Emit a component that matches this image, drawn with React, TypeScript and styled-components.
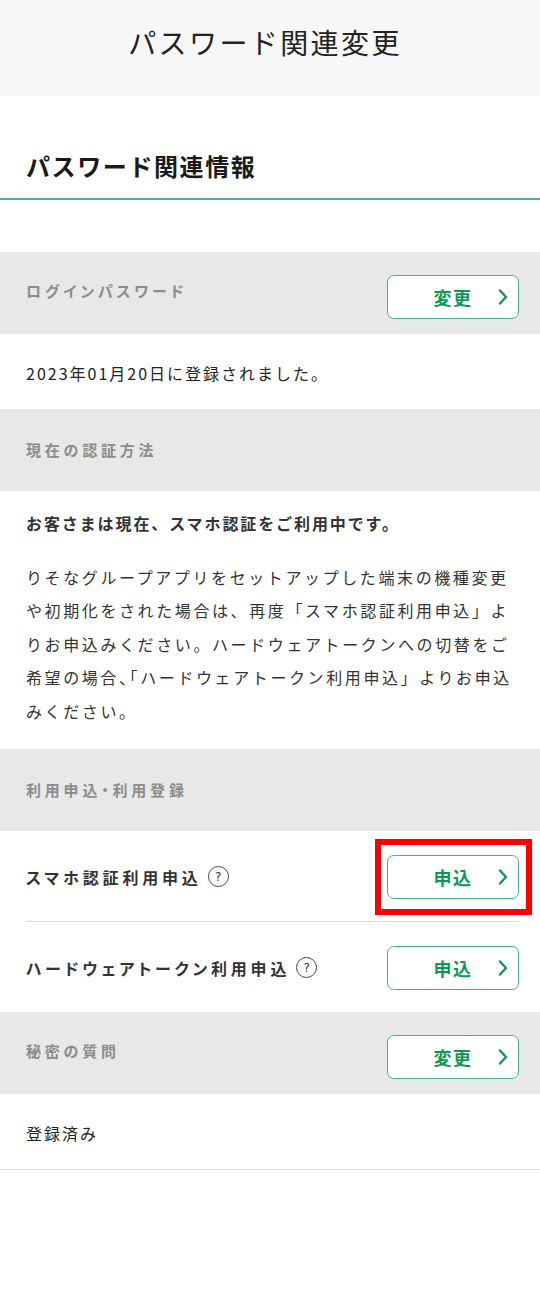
import styled, { createGlobalStyle } from 'styled-components';

const GlobalStyle = createGlobalStyle`
  body {
    margin: 0;
    background: #fff;
    font-family: "Noto Sans CJK JP", "Noto Sans", sans-serif;
    color: #222;
  }
  * { box-sizing: border-box; }
`;

const Page = styled.div`
  width: 540px;
  min-height: 1295px;
  background: #fff;
`;

const Header = styled.header`
  height: 96px;
  background: #f7f7f7;
  display: flex;
  align-items: center;
  justify-content: center;
  padding-right: 10px;
  padding-bottom: 12px;
`;

const HeaderTitle = styled.h1`
  margin: 0;
  font-size: 28px;
  font-weight: 400;
  letter-spacing: 2.4px;
  color: #222;
`;

const SectionHead = styled.h2`
  margin: 0 0 52px;
  padding: 52px 26px 14px;
  font-size: 24px;
  line-height: 36px;
  font-weight: 700;
  letter-spacing: 1.6px;
  color: #1a1a1a;
  border-bottom: 2px solid #45b48a;
`;

const Band = styled.div<{ $withButton?: boolean }>`
  background: #e8e8e8;
  display: flex;
  align-items: flex-start;
  justify-content: space-between;
  padding: ${(p) => (p.$withButton ? '23px 21px 15px 26px' : '29px 21px 29px 26px')};
`;

const BandLabel = styled.span<{ $withButton?: boolean }>`
  font-size: 15px;
  line-height: 24px;
  font-weight: 700;
  letter-spacing: 3.8px;
  font-feature-settings: "palt";
  color: #8c8c8c;
  padding-top: ${(p) => (p.$withButton ? '4px' : '0')};
`;

const Plain = styled.div<{ $line?: boolean }>`
  padding: 27px 26px 24px;
  font-size: 16px;
  line-height: 24px;
  letter-spacing: 2px;
  color: #222;
  border-bottom: ${(p) => (p.$line ? '1px solid #dcdcdc' : 'none')};
`;

const Body = styled.div`
  padding: 16px 26px 20px;
  font-size: 16px;
  line-height: 33.6px;
  letter-spacing: 2.6px;
  color: #333;
`;

const Lead = styled.p`
  margin: 0 0 20px;
  font-weight: 700;
  letter-spacing: 1.9px;
`;

const Para = styled.p`
  margin: 0;
`;

const Narrow = styled.span`
  font-feature-settings: "halt";
`;

const Row = styled.div<{ $divider?: boolean }>`
  display: flex;
  align-items: center;
  justify-content: space-between;
  margin: 0 21px 0 26px;
  padding: 24px 0 22px;
  border-bottom: ${(p) => (p.$divider ? '1px solid #dcdcdc' : 'none')};
`;

const RowLabel = styled.span`
  display: flex;
  align-items: center;
  gap: 6px;
  font-size: 16px;
  font-weight: 700;
  letter-spacing: 3.8px;
  font-feature-settings: "palt";
  color: #333;
`;

const Help = styled.span`
  width: 21px;
  height: 21px;
  border: 1.5px solid #444;
  border-radius: 50%;
  display: inline-flex;
  align-items: center;
  justify-content: center;
  font-size: 12px;
  font-weight: 400;
  letter-spacing: 0;
  color: #333;
  font-family: "DejaVu Sans", sans-serif;
`;

const Button = styled.button<{ $marked?: boolean }>`
  position: relative;
  width: 132px;
  height: 44px;
  flex: none;
  background: #fff;
  border: 1.5px solid #3fb48b;
  border-radius: 7px;
  color: #109656;
  font-family: inherit;
  font-size: 18px;
  font-weight: 700;
  letter-spacing: 1.5px;
  display: flex;
  align-items: center;
  justify-content: center;
  padding: 0;
  cursor: pointer;

  svg {
    position: absolute;
    right: 10px;
    top: 50%;
    transform: translateY(-50%);
  }

  ${(p) =>
    p.$marked &&
    `
    &::after {
      content: '';
      position: absolute;
      left: -13px;
      right: -14px;
      top: -17px;
      bottom: -17px;
      border: 6px solid #ff0000;
      pointer-events: none;
    }
  `}
`;

const Chevron = () => (
  <svg width="10" height="16" viewBox="0 0 10 16" fill="none">
    <path d="M2 1.5 L8 8 L2 14.5" stroke="#109656" strokeWidth="2.4" strokeLinecap="round" strokeLinejoin="round" />
  </svg>
);

function ActionButton({ label, marked }: { label: string; marked?: boolean }) {
  return (
    <Button $marked={marked}>
      {label}
      <Chevron />
    </Button>
  );
}

function App(): JSX.Element {
  return (
    <Page>
      <GlobalStyle />
      <Header>
        <HeaderTitle>パスワード関連変更</HeaderTitle>
      </Header>

      <SectionHead>パスワード関連情報</SectionHead>

      <Band $withButton>
        <BandLabel $withButton>ログインパスワード</BandLabel>
        <ActionButton label="変更" />
      </Band>
      <Plain>2023年01月20日に登録されました。</Plain>

      <Band>
        <BandLabel>現在の認証方法</BandLabel>
      </Band>
      <Body>
        <Lead>お客さまは現在、スマホ認証をご利用中です。</Lead>
        <Para>
          りそなグループアプリをセットアップした端末の機種変更や初期化をされた場合は、再度「スマホ認証利用申込」よりお申込みください。ハードウェアトークンへの切替をご希望の場合
          <Narrow>、「</Narrow>ハードウェアトークン利用申込」よりお申込みください。
        </Para>
      </Body>

      <Band>
        <BandLabel>
          利用申込<Narrow>・</Narrow>利用登録
        </BandLabel>
      </Band>
      <Row $divider>
        <RowLabel>
          スマホ認証利用申込
          <Help>?</Help>
        </RowLabel>
        <ActionButton label="申込" marked />
      </Row>
      <Row>
        <RowLabel>
          ハードウェアトークン利用申込
          <Help>?</Help>
        </RowLabel>
        <ActionButton label="申込" />
      </Row>

      <Band $withButton>
        <BandLabel $withButton>秘密の質問</BandLabel>
        <ActionButton label="変更" />
      </Band>
      <Plain $line>登録済み</Plain>
    </Page>
  );
}

export default App;
